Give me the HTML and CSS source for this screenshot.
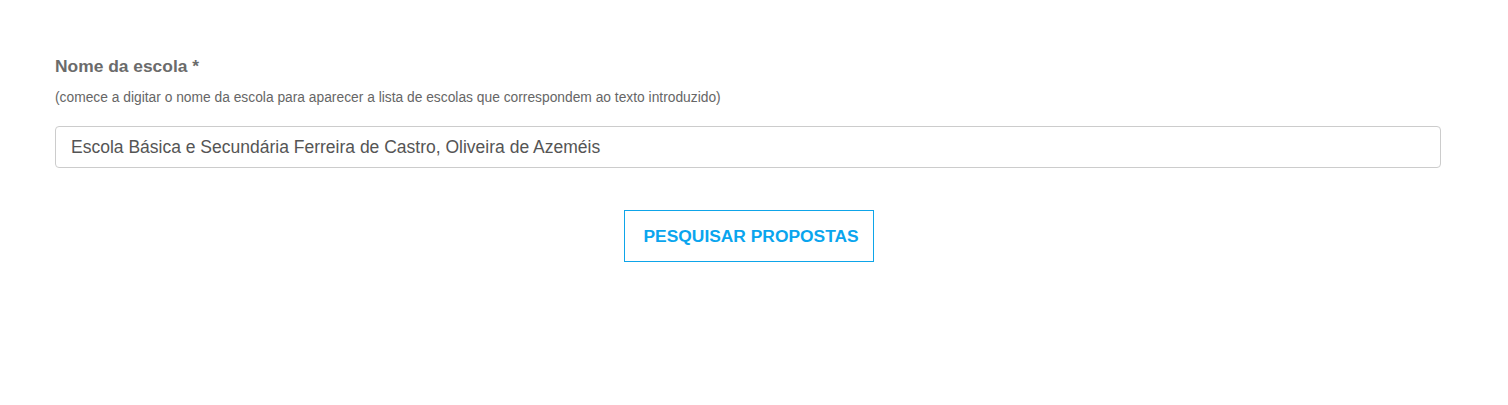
FILE: index.html
```html
<!DOCTYPE html>
<html>
<head>
    <meta charset="utf-8">
    <title>Pesquisar propostas</title>
    <link rel="stylesheet" href="styles.css">
</head>
<body>
    <form class="search-form">
        <div class="form-group">
            <label for="escola">Nome da escola *</label>
            <p class="hint">(comece a digitar o nome da escola para aparecer a lista de escolas que correspondem ao texto introduzido)</p>
            <input type="text" id="escola" value="Escola Básica e Secundária Ferreira de Castro, Oliveira de Azeméis">
        </div>
        <div class="actions">
            <button type="submit">Pesquisar propostas</button>
        </div>
    </form>
</body>
</html>
```

FILE: styles.css
```css
body {
    font-family: "Liberation Sans", Arial, sans-serif;
    margin: 0;
    padding: 0 67px 0 55px;
    background: #fff;
    color: #555;
}
.search-form {
    padding-top: 56px;
}
label {
    display: block;
    font-size: 17.4px;
    font-weight: bold;
    color: #6b6b6b;
    line-height: 20px;
}
.hint {
    margin: 14px 0 0;
    font-size: 13.8px;
    line-height: 16px;
    color: #666;
}
input {
    display: block;
    box-sizing: border-box;
    width: 100%;
    height: 42px;
    margin-top: 20px;
    padding: 0 15px;
    font-family: inherit;
    font-size: 17.5px;
    color: #555;
    border: 1px solid #ccc;
    border-radius: 4px;
}
.actions {
    display: flex;
    justify-content: center;
    margin-top: 42px;
}
button {
    box-sizing: border-box;
    width: 250px;
    height: 52px;
    margin-left: 1px;
    padding: 0 0 0 19px;
    text-align: left;
    background: #fff;
    border: 1px solid #0ea5e9;
    border-radius: 0;
    color: #0aa5ee;
    font-family: inherit;
    font-size: 17.4px;
    font-weight: bold;
    text-transform: uppercase;
    cursor: pointer;
}
```
